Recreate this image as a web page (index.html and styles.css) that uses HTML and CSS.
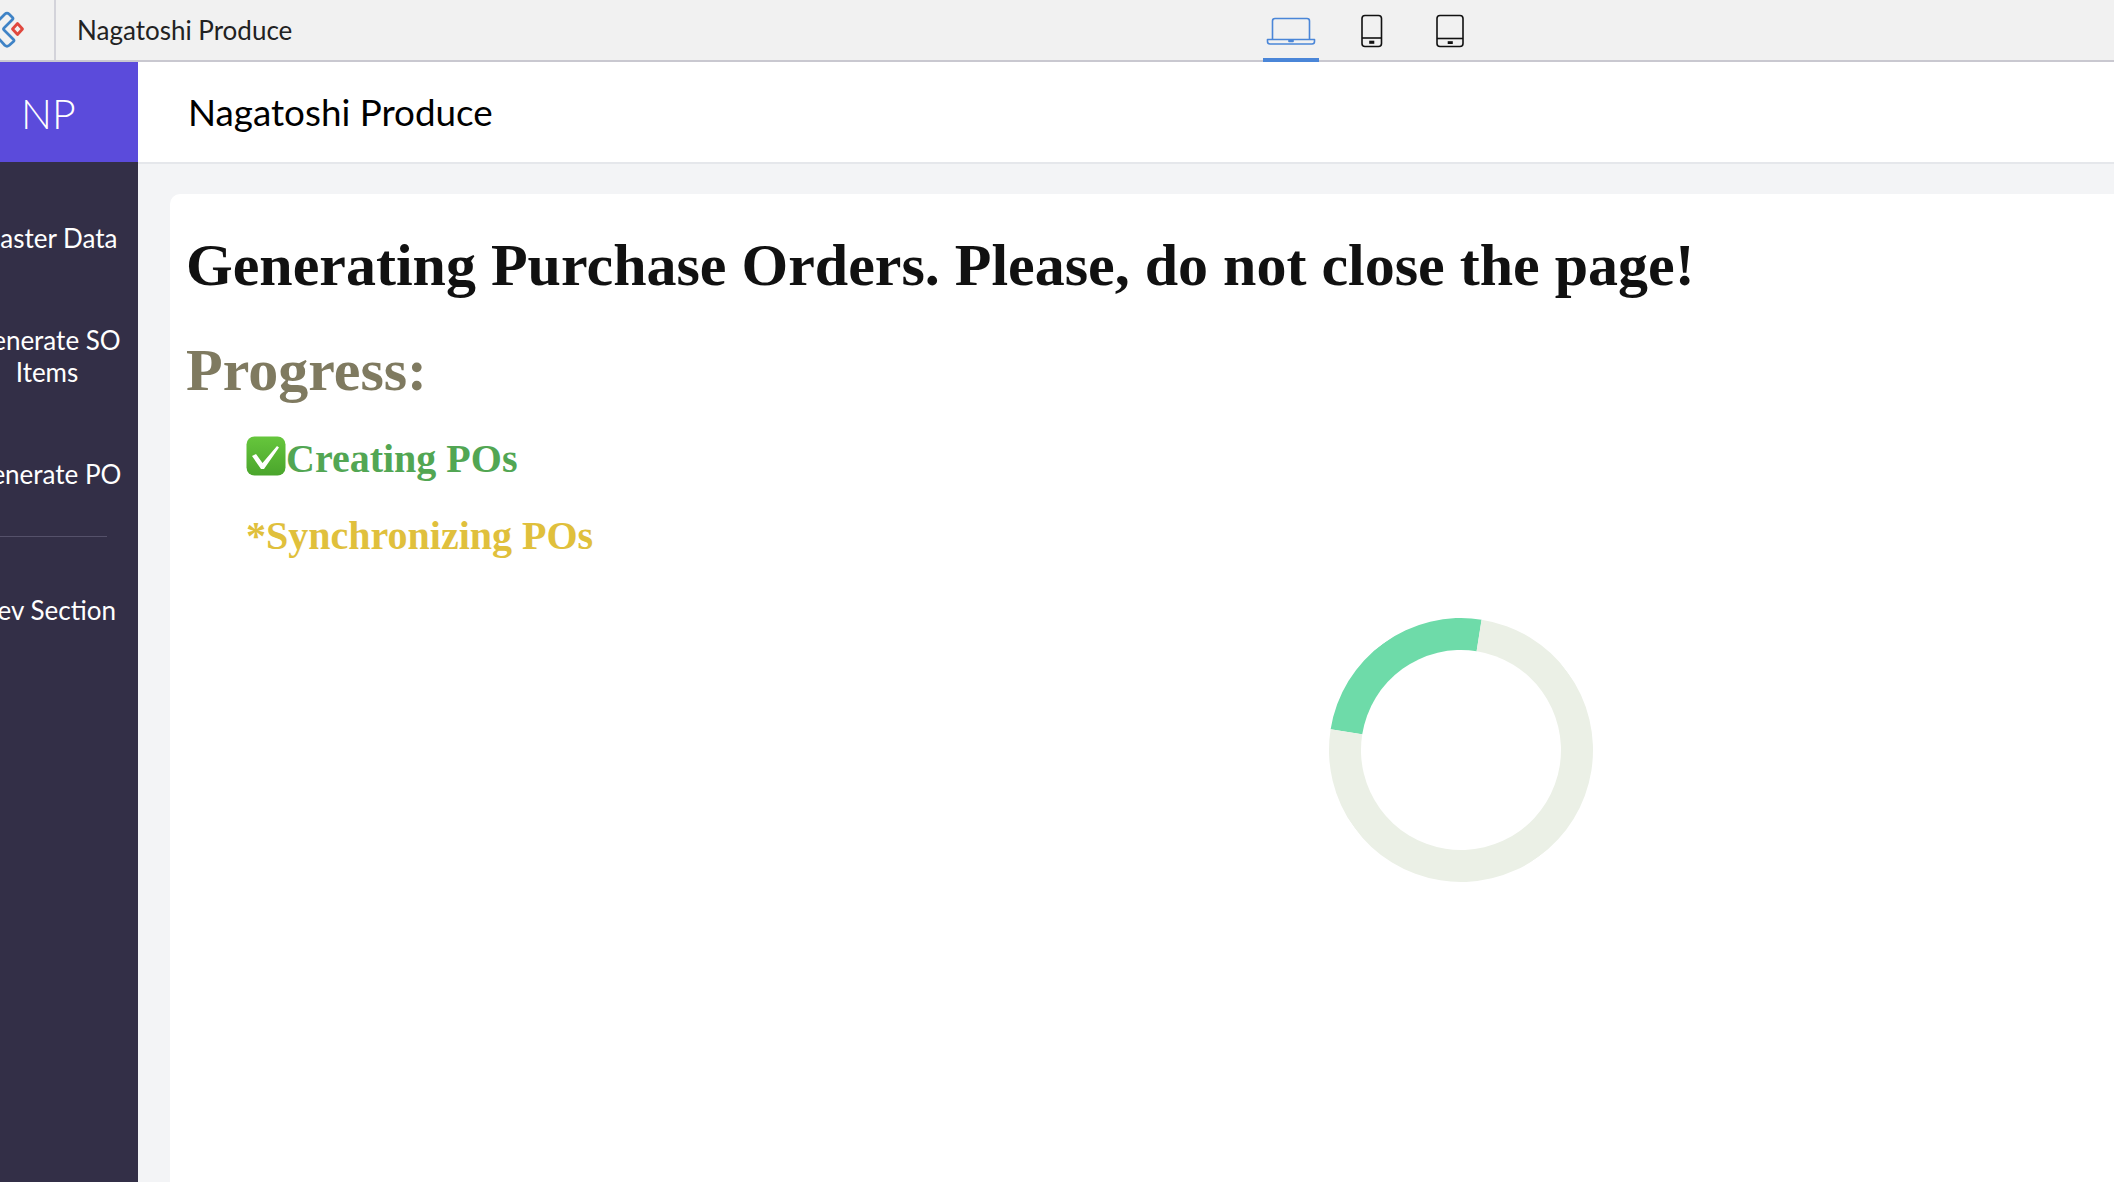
FILE: index.html
```html
<!DOCTYPE html>
<html lang="en">
<head>
<meta charset="utf-8">
<title>Nagatoshi Produce</title>
<link rel="stylesheet" href="styles.css">
</head>
<body>
<header class="topbar">
  <div class="logo-cell">
    <svg class="logo" viewBox="0 0 26 60" width="26" height="60" fill="none">
      <path d="M-1 20 L5 14 Q7 12 9 14 L12.500 17.500 Q13.500 18.500 12.500 19.500 L4 28 Q3 29 4 30 L13.500 39.500 Q14.500 40.500 13.500 41.500 L9 45.500 Q7 47 5 45.500 L-1 39" stroke="#3f83c6" stroke-width="2.700" stroke-linejoin="round"/>
      <path d="M17.500 23.500 L22.500 29 L17.500 34.500 L12.500 29 Z" stroke="#e0483e" stroke-width="2.800" stroke-linejoin="round"/>
    </svg>
  </div>
  <div class="app-name">Nagatoshi Produce</div>
  <nav class="devices">
    <div class="device device-active">
      <svg viewBox="0 0 50 32" width="50" height="32" fill="none" stroke="#4a86d8" stroke-width="1.6" stroke-linejoin="round">
        <path d="M6.5 23 V5 Q6.5 2.5 9 2.5 H41 Q43.500 2.500 43.500 5 V23"/>
        <path d="M1.500 23.500 H48.500 V25.500 Q48.500 28 46 28 H4 Q1.500 28 1.500 25.500 Z"/>
        <path d="M23 24 H27 V25.500 H23 Z" fill="#4a86d8"/>
      </svg>
    </div>
    <div class="device device-phone">
      <svg viewBox="0 0 24 34" width="24" height="34" fill="none" stroke="#111" stroke-width="1.600">
        <rect x="2" y="1.500" width="19.500" height="31" rx="3"/>
        <path d="M2 24 H21.500"/>
        <rect x="10" y="27.500" width="3.500" height="1.500" fill="#111"/>
      </svg>
    </div>
    <div class="device device-tablet">
      <svg viewBox="0 0 30 34" width="30" height="34" fill="none" stroke="#111" stroke-width="1.600">
        <rect x="2" y="1.500" width="26" height="31" rx="3"/>
        <path d="M2 24.500 H28"/>
        <rect x="13.500" y="28" width="3.500" height="1.200" fill="#111"/>
      </svg>
    </div>
  </nav>
</header>
<div class="shell">
  <aside class="sidebar">
    <div class="brand"><span class="brand-text">NP</span></div>
    <ul class="menu">
      <li class="menu-item">Master Data</li>
      <li class="menu-item">Generate SO Items</li>
      <li class="menu-item">Generate PO</li>
      <li class="menu-rule"></li>
      <li class="menu-item">Dev Section</li>
    </ul>
  </aside>
  <main class="main">
    <div class="page-title">Nagatoshi Produce</div>
    <div class="content">
      <section class="card">
        <h1 class="headline">Generating Purchase Orders. Please, do not close the page!</h1>
        <h2 class="progress-title">Progress:</h2>
        <h3 class="step step-done"><svg class="check" viewBox="0 0 40 40" width="40" height="40"><defs><linearGradient id="g" x1="0" y1="0" x2="0" y2="1"><stop offset="0" stop-color="#66c63c"/><stop offset="1" stop-color="#4aa52c"/></linearGradient></defs><rect x="0.500" y="0.500" width="39" height="39" rx="8" fill="url(#g)"/><path d="M6 20 L10 18 L16.500 27 L31 10 L33 11.500 L18 33 H15 Z" fill="#fff"/></svg>Creating POs</h3>
        <h3 class="step step-active">*Synchronizing POs</h3>
        <div class="spinner"></div>
      </section>
    </div>
  </main>
</div>
</body>
</html>
```
FILE: styles.css
```css
* { box-sizing: border-box; }
html, body { margin: 0; height: 100%; overflow: hidden; }
body { font-family: "Lato", sans-serif; background: #f3f4f6; }

.topbar {
  height: 62px;
  display: flex;
  align-items: center;
  background: #f1f1f1;
  border-bottom: 2px solid #c9c8d0;
  position: relative;
}
.logo-cell {
  width: 56px;
  height: 60px;
  border-right: 2px solid #d3d3da;
  overflow: hidden;
}
.logo { display: block; }
.app-name { margin-left: 21px; font-size: 26px; color: #222; }
.devices {
  position: absolute;
  left: 1263px;
  top: 0;
  height: 60px;
  display: flex;
  align-items: flex-start;
}
.device { height: 60px; display: flex; align-items: center; justify-content: center; }
.device svg { margin-top: 2px; }
.device-active { width: 56px; border-bottom: 4px solid #4a86d8; height: 62px; }
.device-active svg { margin-top: 6px; }
.device-phone { width: 24px; margin-left: 41px; }
.device-tablet { width: 30px; margin-left: 51px; }

.shell { display: flex; height: 1120px; margin-left: -44px; }
.sidebar { width: 182px; flex: none; background: #332f47; color: #fff; }
.brand {
  height: 100px;
  background: #5b4bdb;
  display: flex;
  align-items: center;
  padding: 2px 0 0 65px;
}
.brand-text { font-size: 41px; font-weight: 300; }
.menu { list-style: none; margin: 0; padding: 25px 0 0; }
.menu-item {
  padding: 35px 6px;
  text-align: center;
  font-size: 26px;
  line-height: 32px;
}
.menu-rule { height: 1px; margin: 11px 31px 22px; background: #55516a; }

.main { flex: 1; min-width: 0; display: flex; flex-direction: column; }
.page-title {
  height: 102px;
  flex: none;
  background: #fff;
  border-bottom: 2px solid #e5e7eb;
  display: flex;
  align-items: center;
  padding-left: 50px;
  font-size: 36.8px;
  color: #000;
}
.content { flex: 1; padding: 30px 0 0 32px; }
.card {
  height: 100%;
  background: #fff;
  border-radius: 10px 0 0 0;
  padding: 16px;
  font-family: "Liberation Serif", serif;
}
.headline { margin: 21px 0 0; font-size: 60px; line-height: 69px; color: #111; }
.progress-title { margin: 36px 0 0; font-size: 60px; line-height: 69px; color: #7f7a60; }
.step {
  margin: 0 0 0 60px;
  font-size: 40px;
  line-height: 48px;
  display: flex;
  align-items: center;
}
.step-done { margin-top: 30px; color: #52a653; }
.step-active { margin-top: 29px; color: #e0c03c; }
.check { flex: none; margin-top: -6px; }
.spinner {
  width: 264px;
  height: 264px;
  margin: 58px 0 0 1143px;
  border-radius: 50%;
  border: 32px solid #ebf0e6;
  border-top-color: #6edba9;
  transform: rotate(-36deg);
}
```
